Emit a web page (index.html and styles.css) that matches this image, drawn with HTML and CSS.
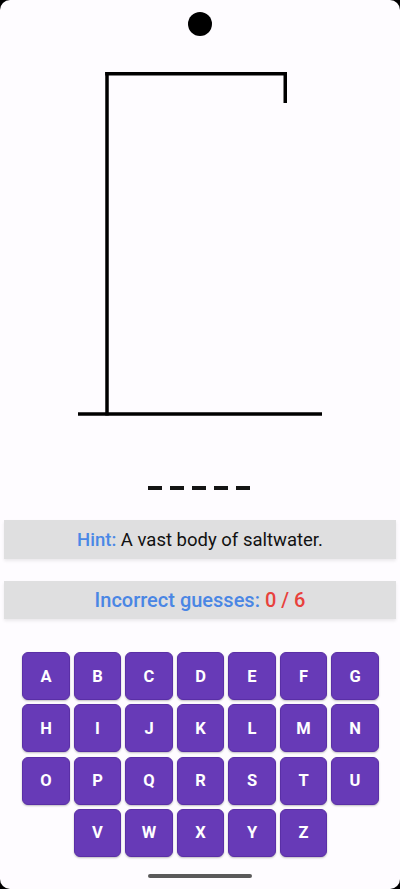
FILE: index.html
```html
<!DOCTYPE html>
<html>
<head>
<meta charset="utf-8">
<link rel="stylesheet" href="styles.css">
</head>
<body>
<div class="screen">
  <div class="status"><div class="camera"></div></div>
  <svg class="gallows" width="400" height="382" viewBox="0 48 400 382">
    <line x1="107" y1="72" x2="107" y2="415.5" stroke="#000" stroke-width="3.5"/>
    <line x1="105.25" y1="73.75" x2="287" y2="73.75" stroke="#000" stroke-width="3.5"/>
    <line x1="285.25" y1="72" x2="285.25" y2="103" stroke="#000" stroke-width="3.5"/>
    <line x1="78" y1="414" x2="322" y2="414" stroke="#000" stroke-width="3.5"/>
  </svg>
  <div class="word">
    <span class="dash"></span><span class="dash"></span><span class="dash"></span><span class="dash"></span><span class="dash"></span>
  </div>
  <div class="panel hint"><span class="label">Hint:</span>&nbsp;A vast body of saltwater.</div>
  <div class="panel guesses"><span class="label">Incorrect guesses:</span>&nbsp;<span class="count">0 / 6</span></div>
  <div class="keyboard">
    <div class="row">
      <button class="key">A</button><button class="key">B</button><button class="key">C</button><button class="key">D</button><button class="key">E</button><button class="key">F</button><button class="key">G</button>
    </div>
    <div class="row">
      <button class="key">H</button><button class="key">I</button><button class="key">J</button><button class="key">K</button><button class="key">L</button><button class="key">M</button><button class="key">N</button>
    </div>
    <div class="row">
      <button class="key">O</button><button class="key">P</button><button class="key">Q</button><button class="key">R</button><button class="key">S</button><button class="key">T</button><button class="key">U</button>
    </div>
    <div class="row">
      <button class="key">V</button><button class="key">W</button><button class="key">X</button><button class="key">Y</button><button class="key">Z</button>
    </div>
  </div>
  <div class="home"></div>
</div>
</body>
</html>
```
FILE: styles.css
```css
html {
  background: #000;
}
body {
  margin: 0;
  background: #000;
  font-family: Roboto, "Noto Sans", sans-serif;
}
.screen {
  width: 400px;
  height: 889px;
  background: #fefcff;
  border-radius: 10px;
  overflow: hidden;
  display: flex;
  flex-direction: column;
}
.status {
  height: 48px;
  display: flex;
  justify-content: center;
}
.camera {
  width: 24px;
  height: 24px;
  margin-top: 12px;
  border-radius: 50%;
  background: #000;
}
.gallows {
  display: block;
}
.word {
  display: flex;
  justify-content: center;
  gap: 8px;
  margin-top: 56px;
  padding-right: 2px;
}
.dash {
  width: 14px;
  height: 4px;
  background: #141414;
}
.panel {
  margin: 0 4px;
  background: #dfdfe0;
  display: flex;
  align-items: center;
  justify-content: center;
  box-shadow: 0 2px 3px rgba(0, 0, 0, 0.08);
}
.hint {
  margin-top: 30px;
  height: 39px;
  font-size: 18.5px;
  color: #111;
}
.hint .label {
  color: #4a88e6;
  font-weight: 500;
}
.guesses {
  margin-top: 22px;
  height: 38px;
  font-size: 20px;
  font-weight: 500;
}
.guesses .label {
  color: #4a86e4;
}
.guesses .count {
  color: #e8413c;
}
.keyboard {
  margin-top: 33px;
  display: flex;
  flex-direction: column;
  gap: 4.3px;
  padding-left: 1px;
}
.row {
  display: flex;
  justify-content: center;
  gap: 4px;
}
.key {
  width: 47.5px;
  height: 48px;
  padding: 0;
  border: 1px solid #5a2fa6;
  border-radius: 6px;
  background: #673ab7;
  color: #fff;
  font-family: Roboto, "Noto Sans", sans-serif;
  font-size: 16.5px;
  font-weight: 700;
  box-shadow: 0 1px 2px rgba(0, 0, 0, 0.25);
}
.home {
  width: 104px;
  height: 4px;
  margin: 17px auto 0;
  border-radius: 2px;
  background: #5a5a5a;
}
```
